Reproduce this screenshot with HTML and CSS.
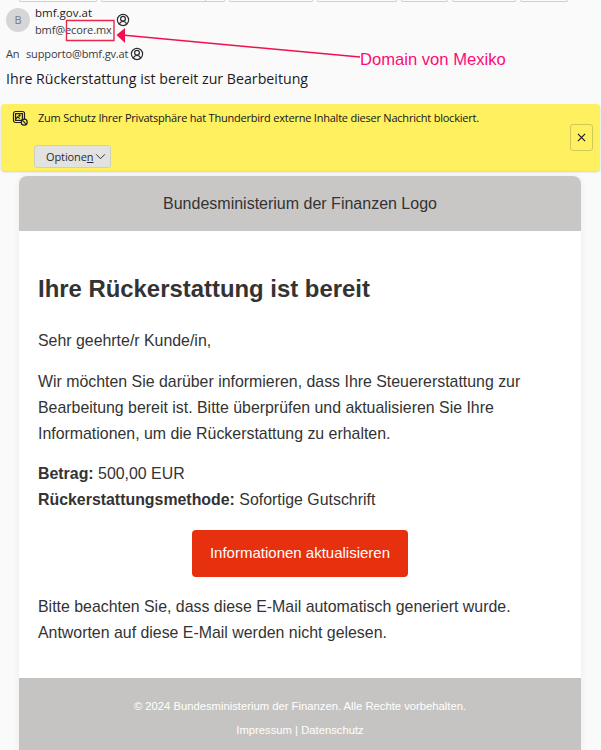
FILE: index.html
```html
<!DOCTYPE html>
<html lang="de">
<head>
<meta charset="utf-8">
<title>Ihre Rückerstattung ist bereit zur Bearbeitung</title>
<link rel="stylesheet" href="styles.css">
</head>
<body>
<div class="toolbar">
  <span class="tb tb1"></span><span class="tb tb2"><i class="tb-split"></i></span><span class="tb tb3"></span><span class="tb tb4"></span><span class="tb tb5"></span><span class="tb tb6"></span><span class="tb tb7"></span>
</div>
<header class="msg-head">
  <div class="from">
    <div class="avatar">B</div>
    <div class="from-text">
      <div class="from-name">bmf.gov.at</div>
      <div class="from-mail">bmf@<span class="boxed">ecore.mx</span></div>
    </div>
    <svg class="contact contact-from" viewBox="0 0 14 14"><circle cx="7" cy="7" r="5.6"/><circle cx="7" cy="5.8" r="2.4"/><path d="M3.4 11.2c.6-2 2-2.7 3.6-2.7s3 .7 3.6 2.7"/></svg>
  </div>
  <div class="to">
    <span class="to-label">An</span>
    <span class="to-mail">supporto@bmf.gv.at</span>
    <svg class="contact" viewBox="0 0 14 14"><circle cx="7" cy="7" r="5.6"/><circle cx="7" cy="5.8" r="2.4"/><path d="M3.4 11.2c.6-2 2-2.7 3.6-2.7s3 .7 3.6 2.7"/></svg>
  </div>
  <div class="subject">Ihre Rückerstattung ist bereit zur Bearbeitung</div>
</header>
<section class="notice">
  <div class="notice-main">
    <div class="notice-row">
      <svg class="notice-icon" viewBox="0 0 16 16"><rect x="1.5" y="1.5" width="11" height="11" rx="2"/><rect x="3.6" y="3.6" width="6.8" height="6.8"/><path d="M3.6 9l2.2-2.2 2 1.8"/><circle cx="7.5" cy="5.5" r=".6"/><circle cx="12.2" cy="12.2" r="3" class="fill"/><path d="M10.2 10.2l4 4"/></svg>
      <span class="notice-text">Zum Schutz Ihrer Privatsphäre hat Thunderbird externe Inhalte dieser Nachricht blockiert.</span>
    </div>
    <button class="options"><span>Optione<u>n</u></span><svg class="chev" viewBox="0 0 12 8"><path d="M1 1.5l5 5 5-5"/></svg></button>
  </div>
  <button class="close"><svg viewBox="0 0 10 10"><path d="M1 1l8 8M9 1l-8 8"/></svg></button>
</section>
<main class="email">
  <div class="email-head">Bundesministerium der Finanzen Logo</div>
  <div class="email-body">
    <h1>Ihre Rückerstattung ist bereit</h1>
    <p class="greet">Sehr geehrte/r Kunde/in,</p>
    <p>Wir möchten Sie darüber informieren, dass Ihre Steuererstattung zur Bearbeitung bereit ist. Bitte überprüfen und aktualisieren Sie Ihre Informationen, um die Rückerstattung zu erhalten.</p>
    <p><strong>Betrag:</strong> 500,00 EUR<br><strong>Rückerstattungsmethode:</strong> Sofortige Gutschrift</p>
    <div class="cta-wrap"><a class="cta">Informationen aktualisieren</a></div>
    <p>Bitte beachten Sie, dass diese E-Mail automatisch generiert wurde. Antworten auf diese E-Mail werden nicht gelesen.</p>
  </div>
  <footer class="email-foot">
    <p>© 2024 Bundesministerium der Finanzen. Alle Rechte vorbehalten.</p>
    <p>Impressum | Datenschutz</p>
  </footer>
</main>
<svg class="annot-arrow" viewBox="0 0 601 100"><path class="box" d="M66.5 20.5H114V40.5H66.5Z"/><path class="line" d="M122 35L360 57"/><path class="head" d="M116.5 35L125 28L125 43Z"/></svg>
<div class="annot-text">Domain von Mexiko</div>
</body>
</html>
```
FILE: styles.css
```css
html, body { margin: 0; padding: 0; }
body {
  position: relative;
  width: 601px;
  height: 750px;
  overflow: hidden;
  background: #fafafa;
  font-family: "Open Sans", "Noto Sans", sans-serif;
  color: #1c1b22;
}
.toolbar { display: flex; height: 2px; padding-left: 19px; gap: 4px; overflow: hidden; }
.tb { display: block; position: relative; box-sizing: border-box; height: 2px; border: 1px solid #cfcfd1; border-top: 0; border-radius: 0 0 3px 3px; }
.tb-split { position: absolute; left: 103px; top: 0; width: 1px; height: 2px; background: #cfcfd1; }
.tb1 { width: 78px; } .tb2 { width: 124px; } .tb3 { width: 84px; } .tb4 { width: 80px; }
.tb5 { width: 47px; } .tb6 { width: 64px; } .tb7 { width: 48px; }
.msg-head { height: 102px; position: relative; }
.from { display: flex; align-items: flex-start; padding: 5px 0 0 6px; }
.avatar {
  width: 24px; height: 24px; border-radius: 50%; background: #d6d6d9; color: #7b7b80;
  font-size: 11px; line-height: 24px; text-align: center; margin-top: 1px;
}
.from-text { margin-left: 5px; }
.from-name { font-size: 11.5px; line-height: 16px; margin-top: -2px; }
.from-mail { font-size: 11px; letter-spacing: -.12px; line-height: 16px; margin-top: 1px; color: #3a3a40; }
.contact { width: 14px; height: 14px; fill: none; stroke: #2b2b30; stroke-width: 1.2; flex: none; }
.contact-from { margin: 6px 0 0 4px; }
.to { display: flex; align-items: center; padding: 8px 0 0 6px; font-size: 11px; letter-spacing: -.14px; line-height: 16px; color: #3a3a40; }
.to-label { width: 20px; }
.to-mail { margin-right: 2px; }
.subject { font-size: 14.2px; line-height: 20px; padding: 7px 0 0 6px; color: #1c1b22; }
.notice {
  display: flex; justify-content: space-between; box-sizing: border-box;
  height: 67px; margin: 0 1px; background: #fff060; border-radius: 4px;
  box-shadow: 0 1px 2px rgba(0,0,0,.18);
}
.notice-row { display: flex; align-items: center; padding: 6px 0 0 11px; }
.notice-icon { width: 16px; height: 16px; fill: none; stroke: #20201f; stroke-width: 1.2; margin-right: 10px; }
.notice-icon .fill { fill: #fff060; }
.notice-text { font-size: 11px; letter-spacing: -.22px; line-height: 16px; color: #15141a; }
.options {
  display: flex; align-items: center; gap: 2px; margin: 19px 0 0 33px;
  width: 77px; height: 23px; padding: 0 0 0 11px; box-sizing: border-box;
  background: #e2e2e0; border: 1px solid #cfcfbf; border-radius: 3px;
  font-family: inherit; font-size: 11px; letter-spacing: -.1px; color: #2c2c30;
}
.chev { width: 11px; height: 7px; fill: none; stroke: #2c2c30; stroke-width: 1.1; }
.close {
  display: flex; align-items: center; justify-content: center;
  width: 23px; height: 27px; margin: 20px 7px 0 0; padding: 0; background: transparent;
  border: 1px solid #d2c85a; border-radius: 3px;
}
.close svg { width: 9px; height: 9px; fill: none; stroke: #15141a; stroke-width: 1.2; }
.email {
  width: 562px; margin: 5px 0 0 19px; background: #fff; border-radius: 8px 8px 0 0;
  font-family: "Liberation Sans", Arial, sans-serif; color: #333; overflow: hidden;
  box-shadow: 0 0 8px rgba(0,0,0,.06);
}
.email-head { height: 55px; background: #c9c7c5; text-align: center; font-size: 16px; line-height: 55px; }
.email-body { padding: 43px 19px 0; height: 404px; font-size: 15.9px; line-height: 26px; }
.email-body h1 { margin: 0 0 24px; font-size: 23.9px; line-height: 30px; color: #333; }
.email-body p { margin: 0 0 14px; }
.email-body .greet { margin-bottom: 15px; }
.cta-wrap { text-align: center; margin: 17px 0 17px; }
.cta {
  display: inline-block; padding: 10px 18px 11px; background: #e6300e; color: #fff;
  font-size: 15px; line-height: 26px; border-radius: 4px;
}
.email-foot { background: #c6c4c2; height: 72px; padding-top: 20px; text-align: center; color: #fff; font-size: 11.25px; line-height: 16px; }
.email-foot p { margin: 0 0 8px; }
.annot-arrow { position: absolute; left: 0; top: 0; width: 601px; height: 100px; }
.annot-arrow .line { stroke: #f0104f; stroke-width: 1.5; fill: none; }
.annot-arrow .box { stroke: #e8274a; stroke-width: 1.4; fill: none; }
.annot-arrow .head { fill: #f0104f; }
.annot-text { position: absolute; left: 360px; top: 50px; font-family: "Liberation Sans", Arial, sans-serif; font-size: 16.6px; line-height: 20px; color: #ff0a78; }
```
